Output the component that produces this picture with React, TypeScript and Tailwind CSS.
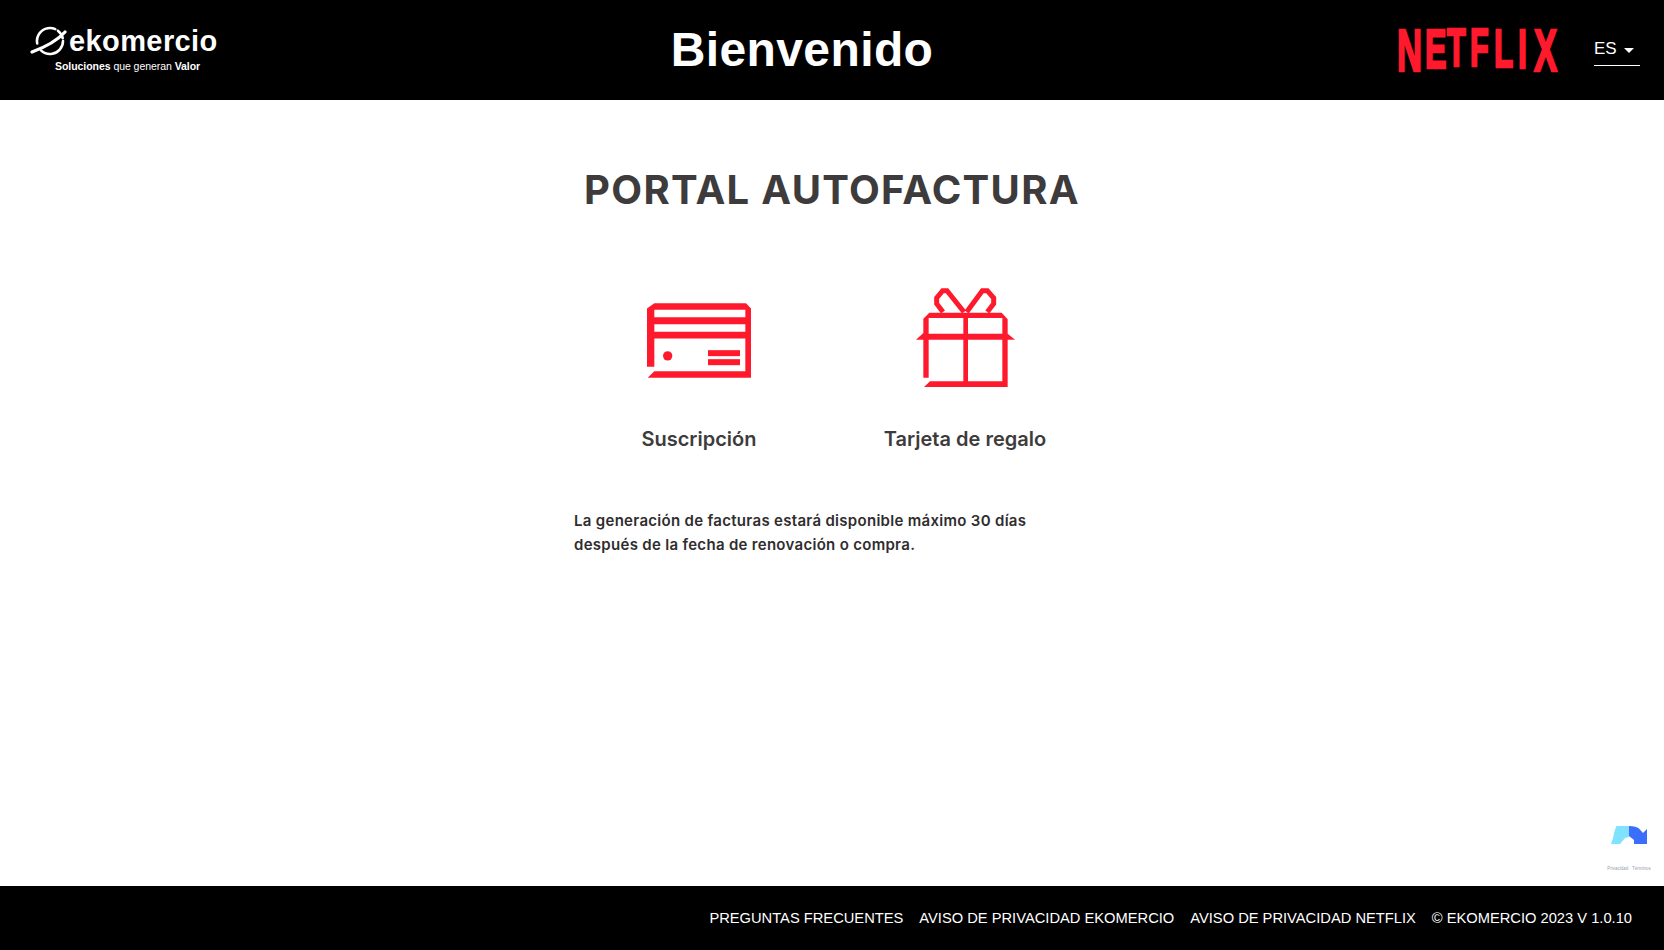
import React from "react";

const sans = "font-['Liberation_Sans',Arial,sans-serif]";

const EkomercioLogo: React.FC = () => (
  <div className="flex flex-col items-start w-[200px] mb-[4px]">
    <div className="flex items-center h-[34px]">
      <svg width="39" height="32" viewBox="0 0 39 32" fill="none" stroke="#fff" strokeLinecap="round">
        <circle cx="20" cy="15" r="13" strokeWidth="2.6" strokeDasharray="28 3 9 3 30 8" transform="rotate(170 20 15)" />
        <path d="M2 26 C10 23 26 16 35 6" strokeWidth="3.2" />
      </svg>
      <span className={`${sans} text-[29px] leading-none font-bold text-white tracking-[0.4px]`}>ekomercio</span>
    </div>
    <p className={`${sans} text-[10.5px] leading-[12px] text-white ml-[25px] mt-[1px] tracking-[-0.05px]`}>
      <b>Soluciones</b> que generan <b>Valor</b>
    </p>
  </div>
);

// per letter placement, the wordmark's bottom edge is curved
const netflixLetters = [
  { c: "N", x: 0, h: 43 },
  { c: "E", x: 28, h: 40 },
  { c: "T", x: 50, h: 38 },
  { c: "F", x: 73, h: 38 },
  { c: "L", x: 97, h: 39 },
  { c: "I", x: 121, h: 40 },
  { c: "X", x: 137, h: 43 },
];
const netflixScaleX = 0.58;

const NetflixLogo: React.FC = () => (
  <svg width="162" height="46" viewBox="0 0 162 46" className="block overflow-visible">
    <text
      transform={`scale(${netflixScaleX} 1)`}
      fill="#fe1a2c"
      stroke="#fe1a2c"
      strokeWidth="2.4"
      fontFamily="'Liberation Sans Narrow','Liberation Sans',sans-serif"
      fontWeight="700"
    >
      {netflixLetters.map((l) => (
        <tspan key={l.c} x={l.x / netflixScaleX} y={l.h + 1} fontSize={l.h / 0.72}>
          {l.c}
        </tspan>
      ))}
    </text>
  </svg>
);

const CardIcon: React.FC = () => (
  <svg width="104" height="75" viewBox="48 84 312 224" fill="#fe1a2c" className="mt-[6px]">
    <path
      fillRule="evenodd"
      d="M70 84H345L360 100V308H50L70 288H343V190H70V275H48V100ZM70 104V126H343V104ZM70 147V170H343V147Z"
    />
    <circle cx="110" cy="242" r="14" />
    <rect x="231" y="225" width="96" height="18" />
    <rect x="231" y="252" width="96" height="18" />
  </svg>
);

const GiftIcon: React.FC = () => (
  <svg width="99" height="99" viewBox="48 38 297 297" fill="#fe1a2c">
    <path d="M88 112H305L323 132V175L345 193H323V335H72L90 318H307V193H204V318H190V193H86V307H70V193H48L70 173V130ZM86 128V175H190V128ZM204 128V175H307V128Z" fillRule="evenodd" />
    <path
      d="M192 110L141 46H128L110 68V85L129 110M200 110L247 46H262L281 68V85L262 110"
      fill="none"
      stroke="#fe1a2c"
      strokeWidth="15"
    />
  </svg>
);

const RecaptchaBadge: React.FC = () => (
  <div className="absolute right-[10px] bottom-[79px] flex flex-col items-center w-[50px]">
    <svg width="36" height="18" viewBox="0 0 36 18">
      <path d="M0 18L2 12C3 7 4 3 5.5 0H18V11L14 12L9 18Z" fill="#7fe3ff" />
      <path d="M18 0C23 0 26 1 28 2.5L32 7L36 3V18H23V14L18 10Z" fill="#3b6ffb" />
    </svg>
    <span className={`${sans} text-[4.5px] leading-[5px] text-gray-400 mt-[22px] whitespace-nowrap`}>Privacidad · Términos</span>
  </div>
);

const OptionItem: React.FC<{ label: string; icon: React.ReactNode }> = ({ label, icon }) => (
  <a className="flex flex-col items-center cursor-pointer">
    <div className="h-[99px] flex items-center justify-center">{icon}</div>
    <span className="mt-[38px] text-[20px] leading-[28px] font-semibold text-[#3d3b3c]">{label}</span>
  </a>
);

export default function App() {
  return (
    <div className="relative h-[950px] flex flex-col bg-white font-['Inter',sans-serif] overflow-hidden">
      <header className="h-[100px] shrink-0 bg-black flex items-center pl-[30px] pr-[24px]">
        <EkomercioLogo />
        <h1 className={`${sans} flex-1 text-center text-[48px] leading-none font-bold text-white pr-[23px] tracking-[0.4px]`}>
          Bienvenido
        </h1>
        <NetflixLogo />
        <button className={`${sans} ml-[35px] w-[46px] h-[35px] mb-[3px] pt-[2px] border-b border-white flex items-center gap-[7px] text-[17px] text-white`}>
          ES
          <span className="w-0 h-0 border-x-[5px] border-x-transparent border-t-[5px] border-t-white mt-[2px]" />
        </button>
      </header>

      <main className="flex-1 flex flex-col items-center">
        <h2 className="mt-[66px] text-[40px] leading-[48px] font-bold text-[#3d3b3c] tracking-[1.3px]">PORTAL AUTOFACTURA</h2>
        <div className="mt-[74px] grid grid-cols-[266px_266px]">
          <OptionItem label="Suscripción" icon={<CardIcon />} />
          <OptionItem label="Tarjeta de regalo" icon={<GiftIcon />} />
        </div>
        <p className="mt-[56px] w-[516px] text-[15px] leading-[24px] font-semibold text-[#2f2d2e] tracking-[0.3px]">
          La generación de facturas estará disponible máximo 30 días
          <br />
          después de la fecha de renovación o compra.
        </p>
      </main>

      <RecaptchaBadge />

      <footer className={`${sans} h-[64px] shrink-0 bg-black flex items-center justify-end gap-[16px] pr-[32px] text-[14.7px] text-white`}>
        <a>PREGUNTAS FRECUENTES</a>
        <a>AVISO DE PRIVACIDAD EKOMERCIO</a>
        <a>AVISO DE PRIVACIDAD NETFLIX</a>
        <span>© EKOMERCIO 2023 V 1.0.10</span>
      </footer>
    </div>
  );
}
